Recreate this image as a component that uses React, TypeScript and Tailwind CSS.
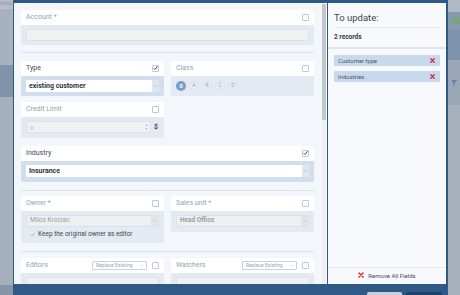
import React from "react";

const Check = ({ on }: { on?: boolean }) => (
  <span className="w-[7px] h-[7px] border border-[#b9c9dd] rounded-[1px] bg-white flex items-center justify-center shrink-0">
    {on && (
      <svg viewBox="0 0 10 10" className="w-[8px] h-[8px] -mt-[1px]">
        <path d="M1.5 5.5 L4 8 L9 1.5" fill="none" stroke="#2d3a48" strokeWidth="1.8" />
      </svg>
    )}
  </span>
);

const RedX = ({ size = 6 }: { size?: number }) => (
  <svg viewBox="0 0 10 10" width={size} height={size} className="shrink-0">
    <path d="M1.5 1.5 L8.5 8.5 M8.5 1.5 L1.5 8.5" stroke="#d9252f" strokeWidth="2.4" strokeLinecap="round" />
  </svg>
);

const Arrow = ({ tone = "blue" }: { tone?: "blue" | "gray" }) => (
  <span
    className={`w-[7px] self-stretch flex items-center justify-center ${
      tone === "blue" ? "bg-[#dde6f1]" : "bg-[#e2e4e7]"
    }`}
  >
    <svg viewBox="0 0 6 4" className="w-[3px] h-[2px]">
      <path d="M0.5 0.5 L3 3 L5.5 0.5" fill="none" stroke="#8a9bb0" strokeWidth="1" />
    </svg>
  </span>
);

function Card({
  label,
  checked,
  bodyH,
  right,
  children,
}: {
  label: string;
  checked?: boolean;
  bodyH: string;
  right?: React.ReactNode;
  children?: React.ReactNode;
}) {
  return (
    <div className="flex-1 flex flex-col rounded-[2px] overflow-hidden">
      <div className="h-[15px] bg-white flex items-center pl-[5px] pr-[5px]">
        <span className={`text-[7px] flex-1 ${checked ? "text-[#3f4a56]" : "text-[#97a1ac]"}`}>{label}</span>
        {right}
        <Check on={checked} />
      </div>
      <div className={`${bodyH} ${checked ? "bg-[#d2deec]" : "bg-[#e3eaf2]"} px-[5px] pt-[4px]`}>{children}</div>
    </div>
  );
}

const ReplaceSelect = () => (
  <span className="w-[55px] h-[9px] mr-[5px] border border-[#c3d3e6] bg-white rounded-[1px] flex items-center px-[3px] text-[5px] text-[#9aa5b1]">
    <span className="flex-1">Replace Existing</span>
    <svg viewBox="0 0 6 4" className="w-[3px] h-[2px]">
      <path d="M0.5 0.5 L3 3 L5.5 0.5" fill="none" stroke="#a8b4c2" strokeWidth="1" />
    </svg>
  </span>
);

const Divider = ({ mt }: { mt: string }) => <div className={`${mt} h-px bg-[#d8e2ee]`} />;

function Backdrop() {
  return (
    <div className="flex h-full w-full">
      <div className="w-[13px] flex flex-col">
        <div className="h-[8px] bg-[#b3bcc7] text-[5px] text-[#8f9aa6] overflow-hidden leading-[6px]">nship</div>
        <div className="h-[57px] bg-[#a8b2be] border-t border-[#b9c1ca]" />
        <div className="h-[32px] bg-[#7f93aa]" />
        <div className="h-[188px] bg-[#a6b0bc]" />
        <div className="flex-1 bg-[#8594a6]" />
      </div>
      <div className="flex-1" />
      <div className="w-[12px] flex flex-col">
        <div className="h-[12px] bg-[#b0b9c4]" />
        <div className="h-[18px] bg-[#8799ae] flex items-center pl-[4px]">
          <span className="w-[8px] h-[6px] bg-[#7aa57a] rounded-[1px]" />
        </div>
        <div className="h-[30px] bg-[#7e93ab]" />
        <div className="h-[45px] bg-[#9aa7b6] flex items-center pl-[3px]">
          <svg viewBox="0 0 10 10" className="w-[6px] h-[6px]">
            <path d="M0 0 H10 L6 5 V10 L4 9 V5 Z" fill="#5b80b2" />
          </svg>
        </div>
        <div className="flex-1 bg-[#a7b1bd]" />
      </div>
    </div>
  );
}

export default function App() {
  return (
    <div className="relative w-[460px] h-[295px] overflow-hidden bg-[#a6b0bc] font-['Roboto','Liberation_Sans',sans-serif]">
      <Backdrop />
      <div className="absolute left-[13px] top-0 w-[435px] h-[295px] bg-[#2f5a87] flex flex-col pt-[3px] pl-px pr-[2px]">
        <div className="h-[281px] flex">
          {/* left form */}
          <div className="w-[308px] bg-[#f3f6fa] pt-[7px] pl-[7px] pr-[8px] overflow-hidden">
            <Card label="Account *" bodyH="h-[20px]">
              <div className="h-[12px] bg-[#f0f1f3] border border-[#dde2e8] rounded-[1px]" />
            </Card>
            <Divider mt="mt-[7px]" />
            <div className="mt-[8px] flex gap-[7px]">
              <Card label="Type" checked bodyH="h-[20px]">
                <div className="h-[12px] bg-white rounded-[1px] flex items-center pl-[3px]">
                  <span className="flex-1 text-[7px] font-bold text-[#2c3744]">existing customer</span>
                  <Arrow />
                </div>
              </Card>
              <Card label="Class" bodyH="h-[20px]">
                <div className="flex gap-[3px] pt-[1px]">
                  <span className="w-[10px] h-[10px] rounded-full bg-[#7b9dcb] text-white text-[5.5px] font-bold flex items-center justify-center">0</span>
                  {["A", "B", "C", "D"].map((l) => (
                    <span
                      key={l}
                      className="w-[10px] h-[10px] rounded-full bg-[#e9edf2] border border-[#d9e0e8] text-[#98a3ae] text-[5px] flex items-center justify-center"
                    >
                      {l}
                    </span>
                  ))}
                </div>
              </Card>
            </div>
            <div className="mt-[6px] flex gap-[7px]">
              <Card label="Credit Limit" bodyH="h-[21px]">
                <div className="flex items-center gap-[3px]">
                  <div className="flex-1 h-[12px] bg-[#f0f1f3] border border-[#dde2e8] rounded-[1px] flex items-center pl-[3px] pr-[2px]">
                    <span className="flex-1 text-[6px] text-[#b0b7bf]">0</span>
                    <span className="flex flex-col text-[3px] leading-[4px] text-[#a0a8b1]">
                      <span>▲</span>
                      <span>▼</span>
                    </span>
                  </div>
                  <span className="text-[7px] font-bold text-[#3f4a56] w-[5px]">$</span>
                </div>
              </Card>
              <div className="flex-1" />
            </div>
            <div className="mt-[8px] flex">
              <Card label="Industry" checked bodyH="h-[21px]">
                <div className="h-[12px] bg-white rounded-[1px] flex items-center pl-[3px]">
                  <span className="flex-1 text-[7px] font-bold text-[#2c3744]">Insurance</span>
                  <Arrow />
                </div>
              </Card>
            </div>
            <Divider mt="mt-[8px]" />
            <div className="mt-[5px] flex gap-[7px] items-start">
              <Card label="Owner *" bodyH="h-[32px]">
                <div className="h-[12px] bg-[#eeeff1] border border-[#dde0e4] rounded-[1px] flex items-center pl-[3px]">
                  <span className="flex-1 text-[6.5px] text-[#98a0a9]">Milos Krocian</span>
                  <Arrow tone="gray" />
                </div>
                <div className="mt-[3px] flex items-center gap-[3px] pl-[4px]">
                  <svg viewBox="0 0 10 10" className="w-[5px] h-[5px]">
                    <path d="M1.5 5.5 L4 8 L9 1.5" fill="none" stroke="#9aa3ad" strokeWidth="1.6" />
                  </svg>
                  <span className="text-[6.5px] text-[#3f4a56]">Keep the original owner as editor</span>
                </div>
              </Card>
              <Card label="Sales unit *" bodyH="h-[21px]">
                <div className="h-[12px] bg-[#eeeff1] border border-[#dde0e4] rounded-[1px] flex items-center pl-[3px]">
                  <span className="flex-1 text-[6.5px] font-bold text-[#98a0a9]">Head Office</span>
                  <Arrow tone="gray" />
                </div>
              </Card>
            </div>
            <Divider mt="mt-[8px]" />
            <div className="mt-[6px] flex gap-[7px]">
              <Card label="Editors" bodyH="h-[30px]" right={<ReplaceSelect />}>
                <div className="h-[20px] bg-[#f0f1f3] border border-[#dde2e8] rounded-[1px]" />
              </Card>
              <Card label="Watchers" bodyH="h-[30px]" right={<ReplaceSelect />}>
                <div className="h-[20px] bg-[#f0f1f3] border border-[#dde2e8] rounded-[1px]" />
              </Card>
            </div>
          </div>
          {/* scrollbar */}
          <div className="w-[5px] bg-[#f3f6fa] flex pt-[1px]">
            <div className="w-[4px] flex flex-col bg-[#eceef1]">
              <div className="h-[116px] bg-[#c3c7cc] rounded-[1px]" />
            </div>
          </div>
          <div className="w-px bg-[#2f5a87]" />
          {/* right panel */}
          <div className="flex-1 bg-[#f7f9fc] flex flex-col">
            <div className="px-[6px]">
              <div className="pt-[9px] pb-[3px] border-b border-[#e6e9ed] text-[9.5px] leading-[12px] text-[#3a4551]">To update:</div>
              <div className="h-[19px] flex items-center text-[6.5px] font-bold text-[#2f3a46]">2 records</div>
            </div>
            <div className="h-[2px] bg-[#e1e5ea]" />
            <div className="px-[6px] pt-[6px] flex flex-col gap-[5px]">
              {["Customer type", "Industries"].map((t) => (
                <div key={t} className="h-[11px] bg-[#c8d9ed] rounded-[1px] flex items-center pl-[4px] pr-[5px]">
                  <span className="flex-1 text-[6px] text-[#4a5869]">{t}</span>
                  <RedX size={5} />
                </div>
              ))}
            </div>
            <div className="flex-1" />
            <div className="h-[17px] border-t border-[#e6e9ed] flex items-center justify-center gap-[4px] pb-[2px]">
              <RedX size={6} />
              <span className="text-[6px] text-[#3f4a56]">Remove All Fields</span>
            </div>
          </div>
        </div>
        {/* footer */}
        <div className="flex-1 flex justify-end items-start gap-[4px] pr-[4px] pt-[8px]">
          <div className="w-[35px] h-[8px] bg-[#c8d0d9] rounded-t-[2px]" />
          <div className="w-[36px] h-[8px] bg-[#1f4166] rounded-t-[2px]" />
        </div>
      </div>
    </div>
  );
}
